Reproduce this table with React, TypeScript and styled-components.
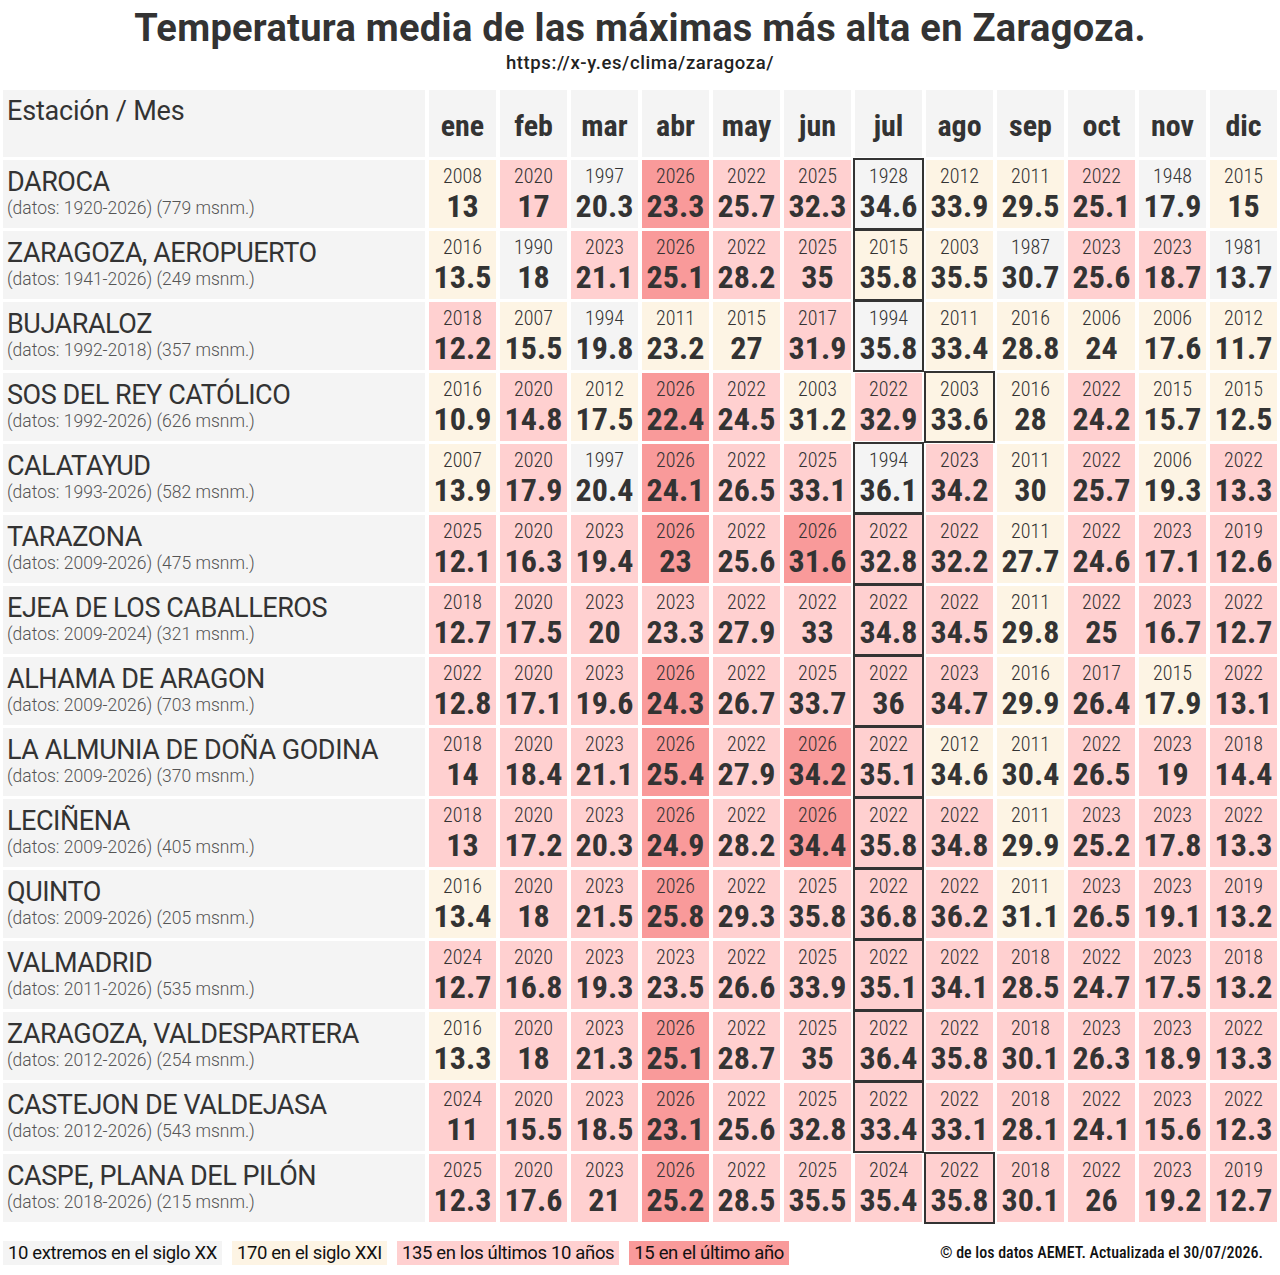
import React from "react";
import styled, { createGlobalStyle } from "styled-components";

const GlobalStyle = createGlobalStyle`
  html, body { margin: 0; padding: 0; background: #ffffff; }
  body { font-family: Roboto, "Noto Sans", "Liberation Sans", sans-serif; color: #333; font-stretch: 75%; }
`;

type Station = { name: string; data: string; years: number[]; vals: number[] };

const STATIONS: Station[] = [
  { name: "DAROCA", data: "(datos: 1920-2026) (779 msnm.)",
    years: [2008, 2020, 1997, 2026, 2022, 2025, 1928, 2012, 2011, 2022, 1948, 2015],
    vals: [13, 17, 20.3, 23.3, 25.7, 32.3, 34.6, 33.9, 29.5, 25.1, 17.9, 15] },
  { name: "ZARAGOZA, AEROPUERTO", data: "(datos: 1941-2026) (249 msnm.)",
    years: [2016, 1990, 2023, 2026, 2022, 2025, 2015, 2003, 1987, 2023, 2023, 1981],
    vals: [13.5, 18, 21.1, 25.1, 28.2, 35, 35.8, 35.5, 30.7, 25.6, 18.7, 13.7] },
  { name: "BUJARALOZ", data: "(datos: 1992-2018) (357 msnm.)",
    years: [2018, 2007, 1994, 2011, 2015, 2017, 1994, 2011, 2016, 2006, 2006, 2012],
    vals: [12.2, 15.5, 19.8, 23.2, 27, 31.9, 35.8, 33.4, 28.8, 24, 17.6, 11.7] },
  { name: "SOS DEL REY CATÓLICO", data: "(datos: 1992-2026) (626 msnm.)",
    years: [2016, 2020, 2012, 2026, 2022, 2003, 2022, 2003, 2016, 2022, 2015, 2015],
    vals: [10.9, 14.8, 17.5, 22.4, 24.5, 31.2, 32.9, 33.6, 28, 24.2, 15.7, 12.5] },
  { name: "CALATAYUD", data: "(datos: 1993-2026) (582 msnm.)",
    years: [2007, 2020, 1997, 2026, 2022, 2025, 1994, 2023, 2011, 2022, 2006, 2022],
    vals: [13.9, 17.9, 20.4, 24.1, 26.5, 33.1, 36.1, 34.2, 30, 25.7, 19.3, 13.3] },
  { name: "TARAZONA", data: "(datos: 2009-2026) (475 msnm.)",
    years: [2025, 2020, 2023, 2026, 2022, 2026, 2022, 2022, 2011, 2022, 2023, 2019],
    vals: [12.1, 16.3, 19.4, 23, 25.6, 31.6, 32.8, 32.2, 27.7, 24.6, 17.1, 12.6] },
  { name: "EJEA DE LOS CABALLEROS", data: "(datos: 2009-2024) (321 msnm.)",
    years: [2018, 2020, 2023, 2023, 2022, 2022, 2022, 2022, 2011, 2022, 2023, 2022],
    vals: [12.7, 17.5, 20, 23.3, 27.9, 33, 34.8, 34.5, 29.8, 25, 16.7, 12.7] },
  { name: "ALHAMA DE ARAGON", data: "(datos: 2009-2026) (703 msnm.)",
    years: [2022, 2020, 2023, 2026, 2022, 2025, 2022, 2023, 2016, 2017, 2015, 2022],
    vals: [12.8, 17.1, 19.6, 24.3, 26.7, 33.7, 36, 34.7, 29.9, 26.4, 17.9, 13.1] },
  { name: "LA ALMUNIA DE DOÑA GODINA", data: "(datos: 2009-2026) (370 msnm.)",
    years: [2018, 2020, 2023, 2026, 2022, 2026, 2022, 2012, 2011, 2022, 2023, 2018],
    vals: [14, 18.4, 21.1, 25.4, 27.9, 34.2, 35.1, 34.6, 30.4, 26.5, 19, 14.4] },
  { name: "LECIÑENA", data: "(datos: 2009-2026) (405 msnm.)",
    years: [2018, 2020, 2023, 2026, 2022, 2026, 2022, 2022, 2011, 2023, 2023, 2022],
    vals: [13, 17.2, 20.3, 24.9, 28.2, 34.4, 35.8, 34.8, 29.9, 25.2, 17.8, 13.3] },
  { name: "QUINTO", data: "(datos: 2009-2026) (205 msnm.)",
    years: [2016, 2020, 2023, 2026, 2022, 2025, 2022, 2022, 2011, 2023, 2023, 2019],
    vals: [13.4, 18, 21.5, 25.8, 29.3, 35.8, 36.8, 36.2, 31.1, 26.5, 19.1, 13.2] },
  { name: "VALMADRID", data: "(datos: 2011-2026) (535 msnm.)",
    years: [2024, 2020, 2023, 2023, 2022, 2025, 2022, 2022, 2018, 2022, 2023, 2018],
    vals: [12.7, 16.8, 19.3, 23.5, 26.6, 33.9, 35.1, 34.1, 28.5, 24.7, 17.5, 13.2] },
  { name: "ZARAGOZA, VALDESPARTERA", data: "(datos: 2012-2026) (254 msnm.)",
    years: [2016, 2020, 2023, 2026, 2022, 2025, 2022, 2022, 2018, 2023, 2023, 2022],
    vals: [13.3, 18, 21.3, 25.1, 28.7, 35, 36.4, 35.8, 30.1, 26.3, 18.9, 13.3] },
  { name: "CASTEJON DE VALDEJASA", data: "(datos: 2012-2026) (543 msnm.)",
    years: [2024, 2020, 2023, 2026, 2022, 2025, 2022, 2022, 2018, 2022, 2023, 2022],
    vals: [11, 15.5, 18.5, 23.1, 25.6, 32.8, 33.4, 33.1, 28.1, 24.1, 15.6, 12.3] },
  { name: "CASPE, PLANA DEL PILÓN", data: "(datos: 2018-2026) (215 msnm.)",
    years: [2025, 2020, 2023, 2026, 2022, 2025, 2024, 2022, 2018, 2022, 2023, 2019],
    vals: [12.3, 17.6, 21, 25.2, 28.5, 35.5, 35.4, 35.8, 30.1, 26, 19.2, 12.7] },
];

const MONTHS = ["ene", "feb", "mar", "abr", "may", "jun", "jul", "ago", "sep", "oct", "nov", "dic"];

type Tone = "xx" | "xxi" | "recent" | "last";

const TONES: Record<Tone, string> = {
  xx: "#f4f4f4",
  xxi: "#fdf4e4",
  recent: "#ffd0d0",
  last: "#f99a9a",
};

const toneOf = (year: number): Tone =>
  year >= 2026 ? "last" : year >= 2017 ? "recent" : year >= 2001 ? "xxi" : "xx";

const Page = styled.div`
  width: 1280px;
  padding-top: 6px;
  display: flex;
  flex-direction: column;
  align-items: stretch;
`;

const Title = styled.h1`
  margin: 0;
  text-align: center;
  font-size: 38px;
  line-height: 45px;
  font-weight: 700;
  font-stretch: 100%;
  letter-spacing: 0.3px;
  color: #333;
`;

const Url = styled.div`
  margin-top: 1px;
  text-align: center;
  font-size: 18.5px;
  line-height: 22px;
  font-weight: 500;
  font-stretch: 100%;
  letter-spacing: 0.6px;
  color: #222;
`;

const Grid = styled.div`
  margin: 16px 3px 0 3px;
  display: grid;
  grid-template-columns: 422px repeat(12, 67px);
  grid-auto-rows: 68px;
  grid-template-rows: 67px;
  column-gap: 4px;
  row-gap: 3px;
`;

const HeadCorner = styled.div`
  background: #f4f4f4;
  padding: 5px 4px;
  font-size: 27px;
  line-height: 32px;
  font-stretch: 100%;
  letter-spacing: -0.2px;
  color: #333;
`;

const HeadMonth = styled.div`
  background: #f4f4f4;
  display: flex;
  align-items: flex-end;
  justify-content: center;
  padding-bottom: 13px;
  font-size: 30px;
  line-height: 36px;
  font-weight: 700;
  color: #333;
`;

const StationCell = styled.div`
  background: #f4f4f4;
  padding: 6px 4px 0 4px;
  display: flex;
  flex-direction: column;
`;

const StationName = styled.div`
  font-size: 27px;
  line-height: 32px;
  font-stretch: 100%;
  letter-spacing: -0.45px;
  color: #333;
`;

const StationData = styled.div`
  font-size: 17.5px;
  line-height: 21px;
  font-weight: 300;
  font-stretch: 100%;
  color: #555;
`;

const ValueCell = styled.div<{ $tone: Tone; $max: boolean }>`
  background: ${(p) => TONES[p.$tone]};
  outline: ${(p) => (p.$max ? "2px solid #333" : "none")};
  position: relative;
  z-index: ${(p) => (p.$max ? 1 : 0)};
  display: flex;
  flex-direction: column;
  align-items: center;
  padding-top: 4px;
`;

const Year = styled.div`
  font-size: 20px;
  line-height: 24px;
  font-weight: 300;
  color: #333;
`;

const Value = styled.div`
  font-size: 32px;
  line-height: 37px;
  font-weight: 700;
  color: #333;
`;

const Footer = styled.div`
  margin: 19px 3px 0 3px;
  display: flex;
  align-items: center;
`;

const Legend = styled.div`
  display: flex;
  gap: 10px;
`;

const LegendItem = styled.span<{ $tone: Tone }>`
  background: ${(p) => TONES[p.$tone]};
  padding: 1px 5px 1px 5px;
  font-size: 18.5px;
  line-height: 22px;
  font-stretch: 100%;
  letter-spacing: -0.35px;
  color: #111;
`;

const Credit = styled.div`
  margin-left: auto;
  margin-right: 14px;
  font-size: 16px;
  line-height: 20px;
  font-weight: 500;
  font-stretch: 75%;
  color: #111;
`;

const fmt = (v: number) => String(v);

export default function App() {
  return (
    <>
      <GlobalStyle />
      <Page>
        <Title>Temperatura media de las máximas más alta en Zaragoza.</Title>
        <Url>https://x-y.es/clima/zaragoza/</Url>
        <Grid>
          <HeadCorner>Estación / Mes</HeadCorner>
          {MONTHS.map((m) => (
            <HeadMonth key={m}>{m}</HeadMonth>
          ))}
          {STATIONS.map((s) => {
            const max = Math.max(...s.vals);
            return (
              <React.Fragment key={s.name}>
                <StationCell>
                  <StationName>{s.name}</StationName>
                  <StationData>{s.data}</StationData>
                </StationCell>
                {s.vals.map((v, i) => (
                  <ValueCell key={i} $tone={toneOf(s.years[i])} $max={v === max}>
                    <Year>{s.years[i]}</Year>
                    <Value>{fmt(v)}</Value>
                  </ValueCell>
                ))}
              </React.Fragment>
            );
          })}
        </Grid>
        <Footer>
          <Legend>
            <LegendItem $tone="xx">10 extremos en el siglo XX</LegendItem>
            <LegendItem $tone="xxi">170 en el siglo XXI</LegendItem>
            <LegendItem $tone="recent">135 en los últimos 10 años</LegendItem>
            <LegendItem $tone="last">15 en el último año</LegendItem>
          </Legend>
          <Credit>© de los datos AEMET. Actualizada el 30/07/2026.</Credit>
        </Footer>
      </Page>
    </>
  );
}
